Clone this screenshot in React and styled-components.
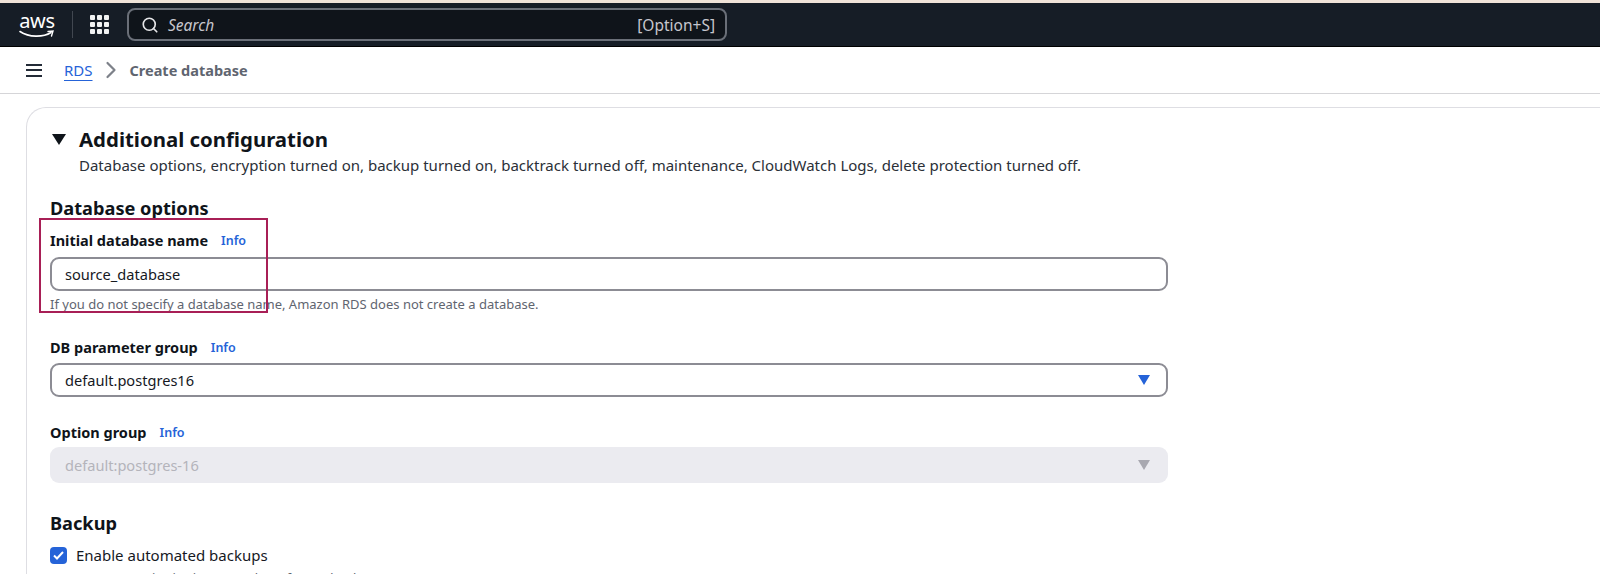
import styled, { createGlobalStyle } from 'styled-components';
import { Search, ChevronRight } from 'lucide-react';

const GlobalStyle = createGlobalStyle`
  html, body {
    margin: 0;
    height: 574px;
    overflow: hidden;
    background: #fff;
    font-family: "Noto Sans", "Open Sans", sans-serif;
    color: #16191f;
  }
`;

const Page = styled.div`
  width: 1600px;
  height: 574px;
  overflow: hidden;
`;

const TopBar = styled.header`
  height: 43px;
  border-top: 3px solid #efe3d8;
  border-bottom: 1px solid #000;
  background: #161d26;
  display: flex;
  align-items: center;
  padding-left: 19px;
`;

const Logo = styled.div`
  width: 36px;
  height: 26px;
  color: #fff;
`;

const LogoText = styled.span`
  display: block;
  font-size: 20px;
  line-height: 18px;
  text-align: center;
  letter-spacing: -0.3px;
`;

const Divider = styled.div`
  width: 1px;
  height: 27px;
  background: #414750;
  margin: 0 17px;
`;

const Grid = styled.div`
  display: grid;
  grid-template-columns: repeat(3, 5px);
  grid-auto-rows: 5px;
  gap: 2px;
  margin-right: 18px;
`;

const Dot = styled.i`
  background: #f2f3f3;
  border-radius: 1px;
`;

const SearchBox = styled.div`
  width: 600px;
  height: 33px;
  box-sizing: border-box;
  border: 2px solid #6a6f78;
  border-radius: 8px;
  background: #0f141a;
  display: flex;
  align-items: center;
  padding: 0 10px 0 12px;
  color: #c6c6cd;
  font-size: 15.5px;
`;

const SearchText = styled.span`
  font-style: italic;
  margin-left: 9px;
  flex: 1;
`;

const Crumbs = styled.nav`
  height: 46px;
  border-bottom: 1px solid #d5d5d8;
  display: flex;
  align-items: center;
  padding-left: 26px;
  font-size: 15px;
`;

const Burger = styled.div`
  width: 16px;
  height: 13px;
  display: flex;
  flex-direction: column;
  justify-content: space-between;
  margin-right: 22px;
`;

const BurgerLine = styled.i`
  height: 2px;
  background: #232b37;
`;

const CrumbLink = styled.a`
  color: #2563d8;
  text-decoration: underline;
  text-underline-offset: 4px;
`;

const CrumbSep = styled.span`
  display: flex;
  color: #7d8189;
  margin: 0 5px 0 4px;
`;

const CrumbCurrent = styled.span`
  font-size: 14.5px;
  font-weight: 700;
  color: #5f6570;
`;

const Card = styled.main`
  margin: 13px 0 0 26px;
  height: 520px;
  border: 1px solid #dedee3;
  border-right: 0;
  border-bottom: 0;
  border-top-left-radius: 20px;
  padding: 17px 0 0 23px;
  box-sizing: border-box;
`;

const Head = styled.div`
  display: flex;
  align-items: center;
  height: 28px;
`;

const Caret = styled.svg`
  width: 14px;
  height: 11px;
  margin: 0 13px 0 2px;
`;

const Title = styled.h2`
  margin: 0;
  font-size: 20.4px;
  line-height: 28px;
  font-weight: 700;
  color: #0f141a;
`;

const Desc = styled.p`
  margin: 2px 0 0 29px;
  font-size: 15px;
  line-height: 20px;
  color: #2b3038;
`;

const Section = styled.h3`
  margin: ${(p) => p.$top}px 0 0;
  font-size: 18.2px;
  line-height: 24px;
  font-weight: 700;
  color: #0f141a;
`;

const Field = styled.div`
  width: 1118px;
  margin-top: ${(p) => p.$top}px;
  position: relative;
`;

const Label = styled.div`
  display: flex;
  align-items: center;
  height: 20px;
  margin-bottom: ${(p) => p.$gap}px;
  font-size: 14.5px;
  font-weight: 700;
  color: #0f141a;
`;

const Info = styled.a`
  color: #2563d8;
  font-size: 12.5px;
  font-weight: 600;
  margin-left: 13px;
`;

const Control = styled.div`
  height: ${(p) => (p.$disabled ? 36 : 34)}px;
  box-sizing: border-box;
  border: ${(p) => (p.$disabled ? '0' : '2px solid #8c8c94')};
  border-radius: 9px;
  background: ${(p) => (p.$disabled ? '#ebebf0' : '#fff')};
  color: ${(p) => (p.$disabled ? '#b4b4bb' : '#16191f')};
  display: flex;
  align-items: center;
  justify-content: space-between;
  padding: ${(p) => (p.$disabled ? '0 18px 0 15px' : '0 16px 0 13px')};
  font-size: 14.6px;
`;

const Arrow = styled.svg`
  width: 12px;
  height: 10px;
`;

const Hint = styled.div`
  margin-top: 5px;
  font-size: 13px;
  line-height: 16px;
  color: #5f6570;
`;

const Highlight = styled.div`
  position: absolute;
  left: -11px;
  top: -12px;
  width: 225px;
  height: 91px;
  border: 2px solid #a81f56;
  pointer-events: none;
`;

const CheckRow = styled.label`
  display: flex;
  align-items: center;
  margin-top: 11px;
  height: 18px;
  font-size: 15px;
`;

const CheckBox = styled.span`
  width: 17px;
  height: 17px;
  border-radius: 4px;
  background: #2563d8;
  display: flex;
  align-items: center;
  justify-content: center;
  margin-right: 9px;
`;

const CheckHint = styled.div`
  margin: 6px 0 0 26px;
  font-size: 13px;
  line-height: 16px;
  color: #5f6570;
`;

const Triangle = ({ color }) => (
  <Arrow viewBox="0 0 12 10">
    <path d="M0 0h12L6 10z" fill={color} />
  </Arrow>
);

export default function App() {
  return (
    <Page>
      <GlobalStyle />
      <TopBar>
        <Logo>
          <LogoText>aws</LogoText>
          <svg width="36" height="10" viewBox="0 0 36 10" style={{ display: 'block' }}>
            <path d="M1 1.5c9 6 23 6 31 1" fill="none" stroke="#fff" strokeWidth="1.6" strokeLinecap="round" />
            <path d="M29 1.5l5-.5-1.5 5" fill="none" stroke="#fff" strokeWidth="1.4" strokeLinecap="round" />
          </svg>
        </Logo>
        <Divider />
        <Grid>
          {Array.from({ length: 9 }).map((_, i) => (
            <Dot key={i} />
          ))}
        </Grid>
        <SearchBox>
          <Search size={18} strokeWidth={2.2} color="#e6e6e8" />
          <SearchText>Search</SearchText>
          <span>[Option+S]</span>
        </SearchBox>
      </TopBar>
      <Crumbs>
        <Burger>
          <BurgerLine />
          <BurgerLine />
          <BurgerLine />
        </Burger>
        <CrumbLink>RDS</CrumbLink>
        <CrumbSep>
          <ChevronRight size={28} strokeWidth={1.9} />
        </CrumbSep>
        <CrumbCurrent>Create database</CrumbCurrent>
      </Crumbs>
      <Card>
        <Head>
          <Caret viewBox="0 0 14 11">
            <path d="M0 0h14L7 11z" fill="#0f141a" />
          </Caret>
          <Title>Additional configuration</Title>
        </Head>
        <Desc>
          Database options, encryption turned on, backup turned on, backtrack turned off, maintenance, CloudWatch Logs,
          delete protection turned off.
        </Desc>
        <Section $top={21}>Database options</Section>
        <Field $top={10}>
          <Highlight />
          <Label $gap={7}>
            Initial database name<Info>Info</Info>
          </Label>
          <Control>source_database</Control>
          <Hint>If you do not specify a database name, Amazon RDS does not create a database.</Hint>
        </Field>
        <Field $top={25}>
          <Label $gap={6}>
            DB parameter group<Info>Info</Info>
          </Label>
          <Control>
            default.postgres16
            <Triangle color="#2563d8" />
          </Control>
        </Field>
        <Field $top={25}>
          <Label $gap={5}>
            Option group<Info>Info</Info>
          </Label>
          <Control $disabled>
            default:postgres-16
            <Triangle color="#a8a8b0" />
          </Control>
        </Field>
        <Section $top={28}>Backup</Section>
        <CheckRow>
          <CheckBox>
            <svg width="11" height="9" viewBox="0 0 11 9">
              <path d="M1 4.5l3 3L10 1" fill="none" stroke="#fff" strokeWidth="2" />
            </svg>
          </CheckBox>
          Enable automated backups
        </CheckRow>
        <CheckHint>Creates a point-in-time snapshot of your database</CheckHint>
      </Card>
    </Page>
  );
}
